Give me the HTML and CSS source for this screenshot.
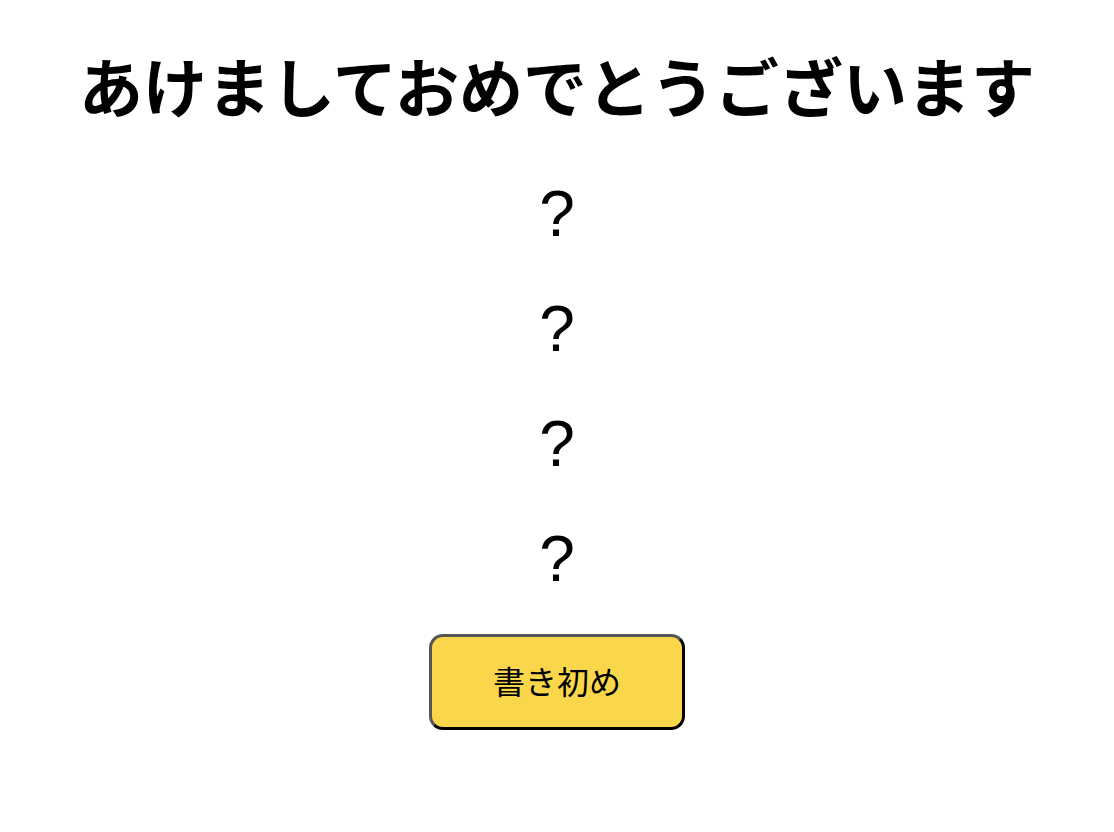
FILE: index.html
```html
<!DOCTYPE html>
<html lang="ja">
<head>
<meta charset="utf-8">
<link rel="stylesheet" href="styles.css">
</head>
<body>
<main class="page">
  <h1 class="title">あけましておめでとうございます</h1>
  <div class="marks">
    <p class="mark">?</p>
    <p class="mark">?</p>
    <p class="mark">?</p>
    <p class="mark">?</p>
  </div>
  <button class="btn" type="button">書き初め</button>
</main>
</body>
</html>
```
FILE: styles.css
```css
html, body { margin: 0; padding: 0; background: #fff; }
body { font-family: "Noto Sans CJK JP", "Liberation Sans", sans-serif; color: #000; }
.page {
  display: flex;
  flex-direction: column;
  align-items: center;
  padding-top: 36px;
}
.title {
  margin: 0;
  font-size: 64px;
  font-weight: 700;
  line-height: 96px;
  letter-spacing: 0;
}
.marks {
  display: flex;
  flex-direction: column;
  align-items: center;
  margin-top: 25px;
}
.mark {
  margin: 0;
  font-family: "Liberation Sans", Arial, sans-serif;
  font-size: 64px;
  line-height: 115px;
  height: 115px;
}
.btn {
  margin-top: 17px;
  width: 256px;
  height: 96px;
  background: #fad74a;
  border: 3px solid #000;
  border-top-color: #555;
  border-left-color: #555;
  border-radius: 14px;
  font-family: "Noto Sans CJK JP", sans-serif;
  font-size: 32px;
  color: #000;
  padding: 0 0 4px 0;
}
```
